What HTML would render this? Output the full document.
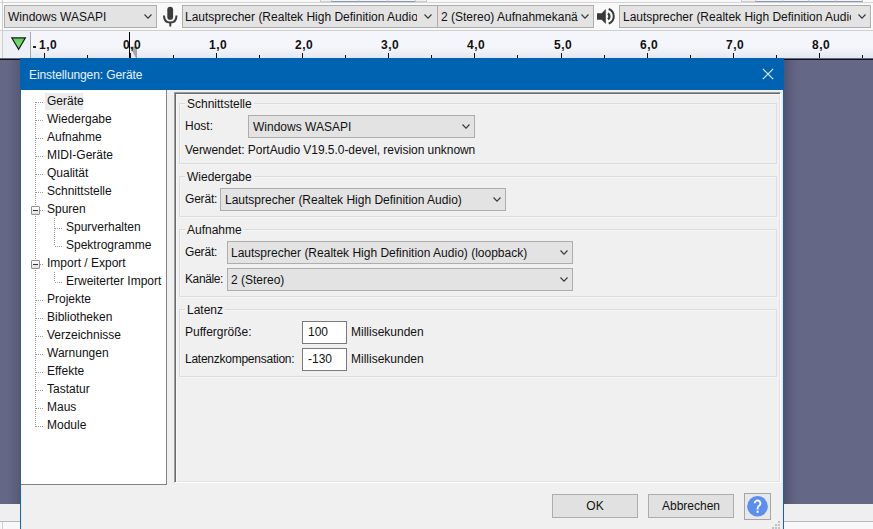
<!DOCTYPE html>
<html><head><meta charset="utf-8">
<style>
*{margin:0;padding:0;box-sizing:border-box}
html,body{width:873px;height:529px;overflow:hidden;background:#f3f3f3;position:relative;font-family:"Liberation Sans",sans-serif;font-size:12px;color:#000}
.a{position:absolute}
.t{position:absolute;font-size:12px;line-height:14px;white-space:nowrap;color:#111}
.cb{position:absolute;background:#e3e3e3;border:1px solid #adadad;overflow:hidden}
.chev{position:absolute;width:8px;height:5px}
.rl{position:absolute;font-weight:bold;font-size:12px;line-height:14px;letter-spacing:0.5px;color:#111;white-space:nowrap}
.tk{position:absolute;width:1px;background:#111}
.ti{position:absolute;font-size:12px;line-height:14px;white-space:nowrap;color:#111}
.gb{position:absolute;border:1px solid #dcdcdc;box-shadow:inset 1px 1px 0 #f5f5f5,1px 1px 0 #f5f5f5}
.gl{position:absolute;background:#f0f0f0;padding:0 2px;font-size:12px;line-height:14px;white-space:nowrap;color:#111}
.btn{position:absolute;background:#e1e1e1;border:1px solid #adadad;text-align:center;font-size:12px;line-height:22px;color:#111}
</style></head><body>

<!-- TOOLBAR -->
<div class="a" style="left:0;top:0;width:873px;height:31px;background:#f9f9f9"></div>
<div class="a" style="left:0;top:2px;width:873px;height:1px;background:#d4d4d4"></div>
<div class="a" style="left:320px;top:0;width:12px;height:2px;border-left:1px solid #c8c8c8;border-right:1px solid #c8c8c8;border-bottom:1px solid #cfcfcf;background:#f4f4f8"></div><div class="a" style="left:331px;top:0;width:28px;height:2px;border-left:1px solid #c8c8c8;border-right:1px solid #c8c8c8;border-bottom:1px solid #8d99b0;background:#f4f4f8"></div><div class="a" style="left:358px;top:0;width:30px;height:2px;border-left:1px solid #c8c8c8;border-right:1px solid #c8c8c8;border-bottom:1px solid #8d99b0;background:#f4f4f8"></div><div class="a" style="left:387px;top:0;width:29px;height:2px;border-left:1px solid #c8c8c8;border-right:1px solid #c8c8c8;border-bottom:1px solid #8d99b0;background:#f4f4f8"></div><div class="a" style="left:415px;top:0;width:12px;height:2px;border-left:1px solid #c8c8c8;border-right:1px solid #c8c8c8;border-bottom:1px solid #cfcfcf;background:#f4f4f8"></div><div class="a" style="left:741px;top:0;width:15px;height:2px;border-left:1px solid #c8c8c8;border-right:1px solid #c8c8c8;border-bottom:1px solid #cfcfcf;background:#f4f4f8"></div><div class="a" style="left:755px;top:0;width:28px;height:2px;border-left:1px solid #c8c8c8;border-right:1px solid #c8c8c8;border-bottom:1px solid #8d99b0;background:#f4f4f8"></div><div class="a" style="left:782px;top:0;width:27px;height:2px;border-left:1px solid #c8c8c8;border-right:1px solid #c8c8c8;border-bottom:1px solid #8d99b0;background:#f4f4f8"></div><div class="a" style="left:808px;top:0;width:28px;height:2px;border-left:1px solid #c8c8c8;border-right:1px solid #c8c8c8;border-bottom:1px solid #8d99b0;background:#f4f4f8"></div><div class="a" style="left:835px;top:0;width:28px;height:2px;border-left:1px solid #c8c8c8;border-right:1px solid #c8c8c8;border-bottom:1px solid #8d99b0;background:#f4f4f8"></div>
<div class="a" style="left:0;top:30px;width:873px;height:1px;background:#cfcfcf"></div>
<div class="a" style="left:2px;top:0;width:1px;height:58px;background:#cfcfcf"></div>

<div class="cb" style="left:4px;top:5px;width:153px;height:23px"></div>
<div class="t" style="left:8px;top:10px">Windows WASAPI</div>
<svg class="chev" style="left:144px;top:14px" viewBox="0 0 8 5"><path d="M0.5 0.5 L4 4.2 L7.5 0.5" fill="none" stroke="#3a3a3a" stroke-width="1.15"/></svg>

<!-- mic -->
<svg class="a" style="left:162px;top:5px" width="17" height="23" viewBox="0 0 17 23">
<rect x="5.3" y="1.8" width="5.8" height="13" rx="2.9" fill="#3c3c3c"/>
<path d="M2 10.5 Q2 17.5 8.2 17.5 Q14.5 17.5 14.5 10.5" fill="none" stroke="#3c3c3c" stroke-width="2"/>
<rect x="7.3" y="17" width="2" height="4.5" fill="#3c3c3c"/>
</svg>

<div class="cb" style="left:182px;top:5px;width:256px;height:23px"></div>
<div class="t" style="left:185px;top:10px;width:232px;overflow:hidden">Lautsprecher (Realtek High Definition Audio</div>
<svg class="chev" style="left:424px;top:14px" viewBox="0 0 8 5"><path d="M0.5 0.5 L4 4.2 L7.5 0.5" fill="none" stroke="#3a3a3a" stroke-width="1.15"/></svg>

<div class="cb" style="left:437px;top:5px;width:157px;height:23px"></div>
<div class="t" style="left:441px;top:10px;width:137px;overflow:hidden">2 (Stereo) Aufnahmekanä</div>
<svg class="chev" style="left:581px;top:14px" viewBox="0 0 8 5"><path d="M0.5 0.5 L4 4.2 L7.5 0.5" fill="none" stroke="#3a3a3a" stroke-width="1.15"/></svg>

<!-- speaker -->
<svg class="a" style="left:596px;top:7px" width="21" height="19" viewBox="0 0 21 19">
<path d="M1 6.2 L5.7 6.2 L9.8 1.9 L9.8 17 L5.7 12.7 L1 12.7 Z" fill="#3a3a3a"/>
<path d="M11.9 6.6 A3.3 3.3 0 0 1 11.9 12.2" fill="none" stroke="#3a3a3a" stroke-width="2.3"/>
<path d="M12.7 2 A7.8 7.8 0 0 1 12.7 16.6" fill="none" stroke="#3a3a3a" stroke-width="2"/>
</svg>

<div class="cb" style="left:619px;top:5px;width:252px;height:23px"></div>
<div class="t" style="left:623px;top:10px;width:228px;overflow:hidden">Lautsprecher (Realtek High Definition Audio</div>
<svg class="chev" style="left:858px;top:14px" viewBox="0 0 8 5"><path d="M0.5 0.5 L4 4.2 L7.5 0.5" fill="none" stroke="#3a3a3a" stroke-width="1.15"/></svg>
<div class="a" style="left:871px;top:3px;width:1px;height:27px;background:#fff"></div>

<!-- RULER -->
<div class="a" style="left:3px;top:31px;width:870px;height:27px;background:#f5f6fb"></div>
<div class="a" style="left:3px;top:47px;width:870px;height:11px;background:linear-gradient(to bottom,rgba(228,232,240,0),rgba(226,230,240,0.9))"></div>
<div class="a" style="left:3px;top:31px;width:27px;height:27px;background:#eef0f7"></div>
<div class="a" style="left:30px;top:32px;width:1px;height:26px;background:#a9a9a9"></div>
<svg class="a" style="left:10px;top:36px" width="17" height="15" viewBox="0 0 17 15">
<defs><linearGradient id="gg" x1="0" y1="0" x2="0" y2="1"><stop offset="0" stop-color="#5ccf55"/><stop offset="0.5" stop-color="#74dc6e"/><stop offset="1" stop-color="#5ccf55"/></linearGradient></defs><path d="M1.8 1.9 L15.4 1.9 L8.6 13.3 Z" fill="url(#gg)" stroke="#1a1a1a" stroke-width="1.15" stroke-linejoin="miter"/>
</svg>
<div class="a" style="left:129px;top:32px;width:1px;height:26px;background:#000"></div><svg class="a" style="left:130px;top:46px" width="7" height="12" viewBox="0 0 7 12"><path d="M0.5 1 L6.5 1 L6.5 12 Z" fill="#a9a9a9" stroke="#888" stroke-width="0.6"/></svg><div class="tk" style="left:44px;top:53px;height:5px"></div><div class="tk" style="left:87px;top:55px;height:3px"></div><div class="a" style="left:33px;top:46px;width:3px;height:1.5px;background:#222"></div><div class="rl" style="left:39px;top:38px">1,0</div><div class="tk" style="left:130px;top:53px;height:5px"></div><div class="tk" style="left:173px;top:55px;height:3px"></div><div class="rl" style="left:123px;top:38px">0,0</div><div class="tk" style="left:216px;top:53px;height:5px"></div><div class="tk" style="left:259px;top:55px;height:3px"></div><div class="rl" style="left:209px;top:38px">1,0</div><div class="tk" style="left:302px;top:53px;height:5px"></div><div class="tk" style="left:345px;top:55px;height:3px"></div><div class="rl" style="left:295px;top:38px">2,0</div><div class="tk" style="left:388px;top:53px;height:5px"></div><div class="tk" style="left:431px;top:55px;height:3px"></div><div class="rl" style="left:381px;top:38px">3,0</div><div class="tk" style="left:474px;top:53px;height:5px"></div><div class="tk" style="left:517px;top:55px;height:3px"></div><div class="rl" style="left:467px;top:38px">4,0</div><div class="tk" style="left:561px;top:53px;height:5px"></div><div class="tk" style="left:604px;top:55px;height:3px"></div><div class="rl" style="left:554px;top:38px">5,0</div><div class="tk" style="left:647px;top:53px;height:5px"></div><div class="tk" style="left:690px;top:55px;height:3px"></div><div class="rl" style="left:640px;top:38px">6,0</div><div class="tk" style="left:733px;top:53px;height:5px"></div><div class="tk" style="left:776px;top:55px;height:3px"></div><div class="rl" style="left:726px;top:38px">7,0</div><div class="tk" style="left:819px;top:53px;height:5px"></div><div class="tk" style="left:862px;top:55px;height:3px"></div><div class="rl" style="left:812px;top:38px">8,0</div>

<!-- TRACK AREA -->
<div class="a" style="left:0;top:58px;width:873px;height:446px;background:#646785"></div>
<div class="a" style="left:0;top:59px;width:873px;height:1px;background:#111"></div>
<div class="a" style="left:0;top:504px;width:873px;height:17px;background:#efefef"></div>
<div class="a" style="left:0;top:521px;width:873px;height:1px;background:#b9b9b9"></div>
<div class="a" style="left:0;top:522px;width:873px;height:7px;background:#f8f8fb"></div>
<div class="a" style="left:2px;top:522px;width:1px;height:7px;background:#d0d0d0"></div>

<!-- DIALOG -->
<div class="a" style="left:784px;top:60px;width:14px;height:444px;background:linear-gradient(to right,rgba(40,44,70,0.32),rgba(40,44,70,0.12) 50%,rgba(40,44,70,0))"></div>
<div class="a" style="left:8px;top:60px;width:12px;height:444px;background:linear-gradient(to left,rgba(40,44,70,0.22),rgba(40,44,70,0))"></div>
<div class="a" style="left:20px;top:58px;width:764px;height:471px;background:#f0f0f0;border-left:1px solid #2d5f8c;border-right:1px solid #2d5f8c;box-shadow:inset 1px 0 0 #d2f1fc,inset -1px 0 0 #d2f1fc"></div>
<div class="a" style="left:20px;top:58px;width:764px;height:32px;background:#0063b1"></div>
<div class="t" style="left:29px;top:68px;color:#e8f2ff;letter-spacing:-0.1px">Einstellungen: Geräte</div>
<svg class="a" style="left:762px;top:68px" width="12" height="12" viewBox="0 0 12 12"><path d="M0.8 0.8 L11.2 11.2 M11.2 0.8 L0.8 11.2" stroke="#dcecff" stroke-width="1.2"/></svg>

<!-- tree -->
<div class="a" style="left:21px;top:90px;width:146px;height:395px;background:#fff;border-right:1px solid #828282;border-bottom:1px solid #828282"></div>
<div class="a" style="left:45px;top:93px;width:38px;height:17px;background:#ececec"></div>
<div class="a" style="left:35px;top:102px;width:1px;height:325px;background:repeating-linear-gradient(to bottom,#9c9c9c 0 1px,transparent 1px 2px)"></div><div class="ti" style="left:47px;top:94px">Geräte</div><div class="a" style="left:36px;top:102px;width:8px;height:1px;background:repeating-linear-gradient(to right,#9c9c9c 0 1px,transparent 1px 2px)"></div><div class="ti" style="left:47px;top:112px">Wiedergabe</div><div class="a" style="left:36px;top:120px;width:8px;height:1px;background:repeating-linear-gradient(to right,#9c9c9c 0 1px,transparent 1px 2px)"></div><div class="ti" style="left:47px;top:130px">Aufnahme</div><div class="a" style="left:36px;top:138px;width:8px;height:1px;background:repeating-linear-gradient(to right,#9c9c9c 0 1px,transparent 1px 2px)"></div><div class="ti" style="left:47px;top:148px">MIDI-Geräte</div><div class="a" style="left:36px;top:156px;width:8px;height:1px;background:repeating-linear-gradient(to right,#9c9c9c 0 1px,transparent 1px 2px)"></div><div class="ti" style="left:47px;top:166px">Qualität</div><div class="a" style="left:36px;top:174px;width:8px;height:1px;background:repeating-linear-gradient(to right,#9c9c9c 0 1px,transparent 1px 2px)"></div><div class="ti" style="left:47px;top:184px">Schnittstelle</div><div class="a" style="left:36px;top:192px;width:8px;height:1px;background:repeating-linear-gradient(to right,#9c9c9c 0 1px,transparent 1px 2px)"></div><div class="ti" style="left:47px;top:202px">Spuren</div><div class="a" style="left:40px;top:210px;width:4px;height:1px;background:repeating-linear-gradient(to right,#9c9c9c 0 1px,transparent 1px 2px)"></div><div class="ti" style="left:66px;top:220px">Spurverhalten</div><div class="a" style="left:55px;top:228px;width:8px;height:1px;background:repeating-linear-gradient(to right,#9c9c9c 0 1px,transparent 1px 2px)"></div><div class="ti" style="left:66px;top:238px">Spektrogramme</div><div class="a" style="left:55px;top:246px;width:8px;height:1px;background:repeating-linear-gradient(to right,#9c9c9c 0 1px,transparent 1px 2px)"></div><div class="ti" style="left:47px;top:256px">Import / Export</div><div class="a" style="left:40px;top:264px;width:4px;height:1px;background:repeating-linear-gradient(to right,#9c9c9c 0 1px,transparent 1px 2px)"></div><div class="ti" style="left:66px;top:274px">Erweiterter Import</div><div class="a" style="left:55px;top:282px;width:8px;height:1px;background:repeating-linear-gradient(to right,#9c9c9c 0 1px,transparent 1px 2px)"></div><div class="ti" style="left:47px;top:292px">Projekte</div><div class="a" style="left:36px;top:300px;width:8px;height:1px;background:repeating-linear-gradient(to right,#9c9c9c 0 1px,transparent 1px 2px)"></div><div class="ti" style="left:47px;top:310px">Bibliotheken</div><div class="a" style="left:36px;top:318px;width:8px;height:1px;background:repeating-linear-gradient(to right,#9c9c9c 0 1px,transparent 1px 2px)"></div><div class="ti" style="left:47px;top:328px">Verzeichnisse</div><div class="a" style="left:36px;top:336px;width:8px;height:1px;background:repeating-linear-gradient(to right,#9c9c9c 0 1px,transparent 1px 2px)"></div><div class="ti" style="left:47px;top:346px">Warnungen</div><div class="a" style="left:36px;top:354px;width:8px;height:1px;background:repeating-linear-gradient(to right,#9c9c9c 0 1px,transparent 1px 2px)"></div><div class="ti" style="left:47px;top:364px">Effekte</div><div class="a" style="left:36px;top:372px;width:8px;height:1px;background:repeating-linear-gradient(to right,#9c9c9c 0 1px,transparent 1px 2px)"></div><div class="ti" style="left:47px;top:382px">Tastatur</div><div class="a" style="left:36px;top:390px;width:8px;height:1px;background:repeating-linear-gradient(to right,#9c9c9c 0 1px,transparent 1px 2px)"></div><div class="ti" style="left:47px;top:400px">Maus</div><div class="a" style="left:36px;top:408px;width:8px;height:1px;background:repeating-linear-gradient(to right,#9c9c9c 0 1px,transparent 1px 2px)"></div><div class="ti" style="left:47px;top:418px">Module</div><div class="a" style="left:36px;top:426px;width:8px;height:1px;background:repeating-linear-gradient(to right,#9c9c9c 0 1px,transparent 1px 2px)"></div><div class="a" style="left:54px;top:218px;width:1px;height:28px;background:repeating-linear-gradient(to bottom,#9c9c9c 0 1px,transparent 1px 2px)"></div><div class="a" style="left:31px;top:206px;width:9px;height:9px;background:linear-gradient(#fff,#e0e0e0);border:1px solid #919191;border-radius:1px"></div><div class="a" style="left:33px;top:210px;width:5px;height:1px;background:#333"></div><div class="a" style="left:54px;top:272px;width:1px;height:10px;background:repeating-linear-gradient(to bottom,#9c9c9c 0 1px,transparent 1px 2px)"></div><div class="a" style="left:31px;top:260px;width:9px;height:9px;background:linear-gradient(#fff,#e0e0e0);border:1px solid #919191;border-radius:1px"></div><div class="a" style="left:33px;top:264px;width:5px;height:1px;background:#333"></div>

<!-- right panel -->
<div class="a" style="left:174px;top:92px;width:607px;height:391px;border-top:1px solid #9c9c9c;border-left:1px solid #9c9c9c;border-right:1px solid #fff;border-bottom:1px solid #fff;box-shadow:inset 1px 1px 0 #6a6a6a,inset 2px 2px 0 #f8f8f8,inset -1px -1px 0 #e3e3e3"></div>

<div class="gb" style="left:179px;top:103px;width:598px;height:61px"></div>
<div class="gl" style="left:185px;top:97px">Schnittstelle</div>
<div class="t" style="left:185px;top:119px">Host:</div>
<div class="cb" style="left:248px;top:115px;width:227px;height:23px"></div>
<div class="t" style="left:253px;top:120px">Windows WASAPI</div>
<svg class="chev" style="left:462px;top:124px" viewBox="0 0 8 5"><path d="M0.5 0.5 L4 4.2 L7.5 0.5" fill="none" stroke="#3a3a3a" stroke-width="1.15"/></svg>
<div class="t" style="left:185px;top:143px;letter-spacing:-0.05px">Verwendet: PortAudio V19.5.0-devel, revision unknown</div>

<div class="gb" style="left:179px;top:176px;width:598px;height:41px"></div>
<div class="gl" style="left:185px;top:170px">Wiedergabe</div>
<div class="t" style="left:185px;top:192px;letter-spacing:-0.2px">Gerät:</div>
<div class="cb" style="left:220px;top:188px;width:286px;height:23px"></div>
<div class="t" style="left:225px;top:193px">Lautsprecher (Realtek High Definition Audio)</div>
<svg class="chev" style="left:493px;top:197px" viewBox="0 0 8 5"><path d="M0.5 0.5 L4 4.2 L7.5 0.5" fill="none" stroke="#3a3a3a" stroke-width="1.15"/></svg>

<div class="gb" style="left:179px;top:229px;width:598px;height:68px"></div>
<div class="gl" style="left:185px;top:223px">Aufnahme</div>
<div class="t" style="left:185px;top:245px;letter-spacing:-0.2px">Gerät:</div>
<div class="cb" style="left:227px;top:241px;width:346px;height:23px"></div>
<div class="t" style="left:231px;top:246px">Lautsprecher (Realtek High Definition Audio) (loopback)</div>
<svg class="chev" style="left:560px;top:250px" viewBox="0 0 8 5"><path d="M0.5 0.5 L4 4.2 L7.5 0.5" fill="none" stroke="#3a3a3a" stroke-width="1.15"/></svg>
<div class="t" style="left:185px;top:272px;letter-spacing:-0.4px">Kanäle:</div>
<div class="cb" style="left:227px;top:268px;width:346px;height:23px"></div>
<div class="t" style="left:231px;top:273px">2 (Stereo)</div>
<svg class="chev" style="left:560px;top:277px" viewBox="0 0 8 5"><path d="M0.5 0.5 L4 4.2 L7.5 0.5" fill="none" stroke="#3a3a3a" stroke-width="1.15"/></svg>

<div class="gb" style="left:179px;top:309px;width:598px;height:68px"></div>
<div class="gl" style="left:185px;top:303px">Latenz</div>
<div class="t" style="left:185px;top:325px">Puffergröße:</div>
<div class="a" style="left:302px;top:321px;width:45px;height:23px;background:#fff;border:1px solid #7a7a7a"></div>
<div class="t" style="left:308px;top:325px">100</div>
<div class="t" style="left:351px;top:325px">Millisekunden</div>
<div class="t" style="left:185px;top:352px;letter-spacing:-0.25px">Latenzkompensation:</div>
<div class="a" style="left:302px;top:348px;width:45px;height:23px;background:#fff;border:1px solid #7a7a7a"></div>
<div class="t" style="left:308px;top:352px">-130</div>
<div class="t" style="left:351px;top:352px">Millisekunden</div>

<!-- buttons -->
<div class="btn" style="left:552px;top:494px;width:86px;height:24px">OK</div>
<div class="btn" style="left:648px;top:494px;width:86px;height:24px">Abbrechen</div>
<div class="a" style="left:744px;top:493px;width:27px;height:27px;background:#e8e8e8;border:1px solid #a6a6a6"></div>
<svg class="a" style="left:746px;top:495px" width="23" height="23" viewBox="0 0 23 23">
<circle cx="11.5" cy="11.3" r="10.3" fill="#5b8ef0"/>
<path d="M8.7 8.3 A2.85 2.85 0 1 1 13.7 10.2 Q11.6 11.5 11.6 13.4 V14.5" fill="none" stroke="#fff" stroke-width="1.9"/>
<rect x="10.6" y="15.7" width="2" height="2.2" fill="#fff"/>
</svg>
<div class="a" style="left:778px;top:521px;width:2px;height:2px;background:#c2c2c2"></div>
<div class="a" style="left:775px;top:524px;width:2px;height:2px;background:#c2c2c2"></div>
<div class="a" style="left:778px;top:524px;width:2px;height:2px;background:#c2c2c2"></div>
<div class="a" style="left:772px;top:527px;width:2px;height:2px;background:#c2c2c2"></div>
<div class="a" style="left:775px;top:527px;width:2px;height:2px;background:#c2c2c2"></div>
<div class="a" style="left:778px;top:527px;width:2px;height:2px;background:#c2c2c2"></div>

</body></html>
